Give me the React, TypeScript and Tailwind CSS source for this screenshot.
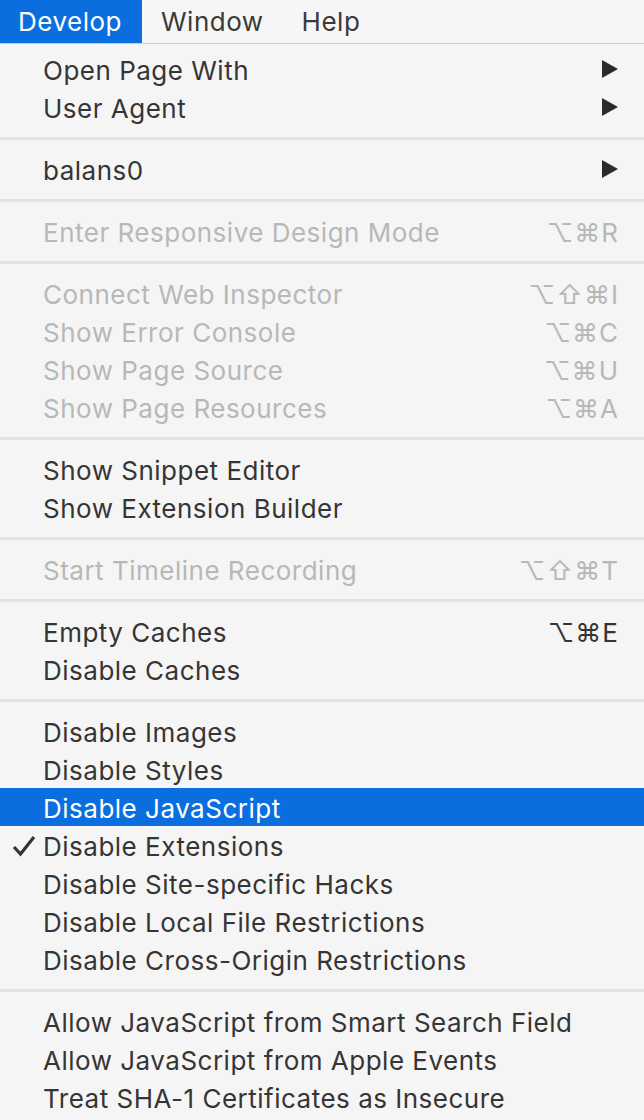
import React from "react";

type Item =
  | { sep: true }
  | {
      label: string;
      disabled?: boolean;
      arrow?: boolean;
      shortcut?: string;
      checked?: boolean;
      active?: boolean;
    };

const items: Item[] = [
  { label: "Open Page With", arrow: true },
  { label: "User Agent", arrow: true },
  { sep: true },
  { label: "balans0", arrow: true },
  { sep: true },
  { label: "Enter Responsive Design Mode", disabled: true, shortcut: "⌥⌘R" },
  { sep: true },
  { label: "Connect Web Inspector", disabled: true, shortcut: "⌥⇧⌘I" },
  { label: "Show Error Console", disabled: true, shortcut: "⌥⌘C" },
  { label: "Show Page Source", disabled: true, shortcut: "⌥⌘U" },
  { label: "Show Page Resources", disabled: true, shortcut: "⌥⌘A" },
  { sep: true },
  { label: "Show Snippet Editor" },
  { label: "Show Extension Builder" },
  { sep: true },
  { label: "Start Timeline Recording", disabled: true, shortcut: "⌥⇧⌘T" },
  { sep: true },
  { label: "Empty Caches", shortcut: "⌥⌘E" },
  { label: "Disable Caches" },
  { sep: true },
  { label: "Disable Images" },
  { label: "Disable Styles" },
  { label: "Disable JavaScript", active: true },
  { label: "Disable Extensions", checked: true },
  { label: "Disable Site-specific Hacks" },
  { label: "Disable Local File Restrictions" },
  { label: "Disable Cross-Origin Restrictions" },
  { sep: true },
  { label: "Allow JavaScript from Smart Search Field" },
  { label: "Allow JavaScript from Apple Events" },
  { label: "Treat SHA-1 Certificates as Insecure" },
];

export default function App() {
  return (
    <div
      className="w-[644px] h-[1120px] overflow-hidden bg-[#f5f5f5] text-[26px] tracking-[0.5px] text-[#353535]"
      style={{ fontFamily: "Inter, 'Liberation Sans', sans-serif" }}
    >
      {/* menu bar */}
      <div className="flex h-[44px] items-stretch border-b border-[#cdcdcd] bg-[#f6f6f6]">
        <div className="flex w-[142px] items-center bg-[#0b6edf] pl-[18px] text-white">Develop</div>
        <div className="flex items-center pl-[19px] text-[#3a3a3a]">Window</div>
        <div className="ml-[38px] flex items-center text-[#3a3a3a]">Help</div>
      </div>

      {/* menu */}
      <div className="pt-[6px]">
        {items.map((it, i) =>
          "sep" in it ? (
            <div key={i} className="flex h-[24px] items-center">
              <div className="h-[3px] w-full bg-[#e2e3e3]" />
            </div>
          ) : (
            <MenuRow key={i} item={it} />
          )
        )}
      </div>
    </div>
  );
}

function MenuRow({ item }: { item: Exclude<Item, { sep: true }> }) {
  const color = item.active
    ? "text-white bg-[#0b6edf]"
    : item.disabled
      ? "text-[#b7b8b8]"
      : "text-[#353535]";
  return (
    <div className={`relative flex h-[38px] items-center pl-[43px] pr-[25px] ${color}`}>
      {item.checked && (
        <svg className="absolute left-[12px] top-[9px]" width="24" height="22" viewBox="0 0 24 22">
          <path d="M2 12 L8.5 19 L22 2" fill="none" stroke="#353535" strokeWidth="3.2" />
        </svg>
      )}
      <span className="flex-1 whitespace-nowrap pt-[2px]">{item.label}</span>
      {item.shortcut && (
        <span className="whitespace-nowrap pt-[2px] tracking-[1px]">{item.shortcut}</span>
      )}
      {item.arrow && (
        <svg width="16" height="18" viewBox="0 0 16 18" className="mr-[1px]">
          <path d="M0 0 L16 9 L0 18 Z" fill="#2b2b2b" />
        </svg>
      )}
    </div>
  );
}
